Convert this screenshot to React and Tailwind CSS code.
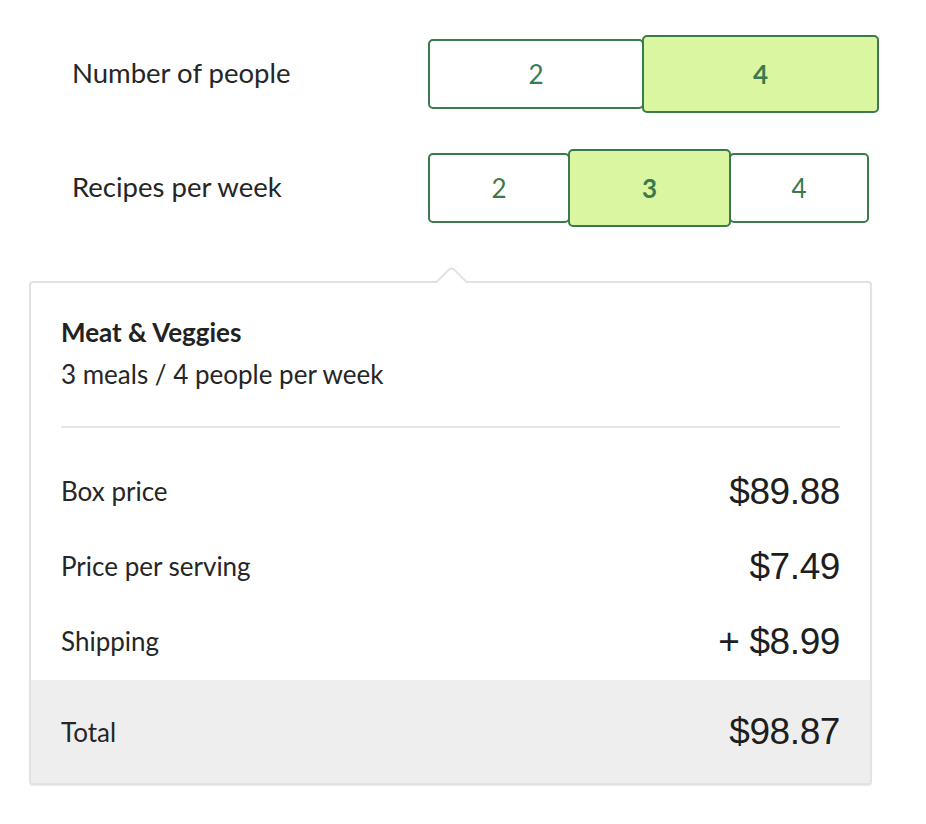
import React from "react";

function Btn({ children, selected, className = "" }) {
  if (selected) {
    return (
      <div
        className={`relative z-10 -my-[4px] flex items-center justify-center rounded-[5px] border-2 border-[#3a7a4c] bg-[#dbf6a0] text-[26px] font-bold text-[#3a7a4c] ${className}`}
      >
        {children}
      </div>
    );
  }
  return (
    <div
      className={`flex items-center justify-center rounded-[5px] border-2 border-[#3a7a4c] bg-white text-[26px] text-[#3a7a4c] ${className}`}
    >
      {children}
    </div>
  );
}

const priceFont = { fontFamily: '"Liberation Sans", Arial, sans-serif' };

function Row({ label, value }) {
  return (
    <div className="flex h-[40px] items-center justify-between">
      <span className="text-[26px] leading-none text-[#262626]">{label}</span>
      <span className="text-[37px] leading-none tracking-[-0.4px] text-[#1e1e1e]" style={priceFont}>
        {value}
      </span>
    </div>
  );
}

export default function App() {
  return (
    <div
      className="h-[824px] w-[926px] bg-white"
      style={{ fontFamily: 'Lato, "Noto Sans", sans-serif' }}
    >
      <div className="flex flex-col pl-[72px] pt-[39px]">
        <div className="flex items-center">
          <div className="-mt-[3px] w-[356px] text-[27.5px] text-[#262626]">Number of people</div>
          <div className="flex h-[70px]">
            <Btn className="w-[216px]">2</Btn>
            <Btn selected className="-ml-[2px] w-[237px]">4</Btn>
          </div>
        </div>
        <div className="mt-[44px] flex items-center">
          <div className="-mt-[3px] w-[356px] text-[27.5px] text-[#262626]">Recipes per week</div>
          <div className="flex h-[70px]">
            <Btn className="w-[142px]">2</Btn>
            <Btn selected className="-ml-[2px] w-[163px]">3</Btn>
            <Btn className="-ml-[2px] w-[140px]">4</Btn>
          </div>
        </div>
      </div>

      <div className="relative ml-[29px] mt-[58px] w-[843px] rounded-[4px] border-2 border-[#e2e2e2] bg-white shadow-[0_1px_1px_rgba(0,0,0,0.08)]">
        <svg
          className="absolute left-[402px] top-[-16px]"
          width="40"
          height="18"
          viewBox="0 0 40 18"
        >
          <path d="M2 16.5 L16 2.5 Q18.5 0.5 21 2.5 L35 16.5" fill="white" stroke="#e2e2e2" strokeWidth="2" />
          <rect x="0" y="16" width="40" height="4" fill="white" />
        </svg>
        <div className="px-[30px] pt-[32px]">
          <div className="text-[26px] font-bold leading-[34px] text-[#222]">Meat &amp; Veggies</div>
          <div className="mt-[8px] text-[26px] leading-[34px] text-[#262626]">3 meals / 4 people per week</div>
          <div className="mt-[35px] h-[2px] bg-[#e6e6e6]" />
          <div className="flex flex-col gap-[35px] pb-[19px] pt-[43px]">
            <Row label="Box price" value="$89.88" />
            <Row label="Price per serving" value="$7.49" />
            <Row label="Shipping" value="+ $8.99" />
          </div>
        </div>
        <div className="flex h-[103px] items-center justify-between rounded-b-[2px] bg-[#eeeeee] px-[30px]">
          <span className="text-[26px] leading-none text-[#262626]">Total</span>
          <span className="text-[37px] leading-none tracking-[-0.4px] text-[#1e1e1e]" style={priceFont}>
            $98.87
          </span>
        </div>
      </div>
    </div>
  );
}
